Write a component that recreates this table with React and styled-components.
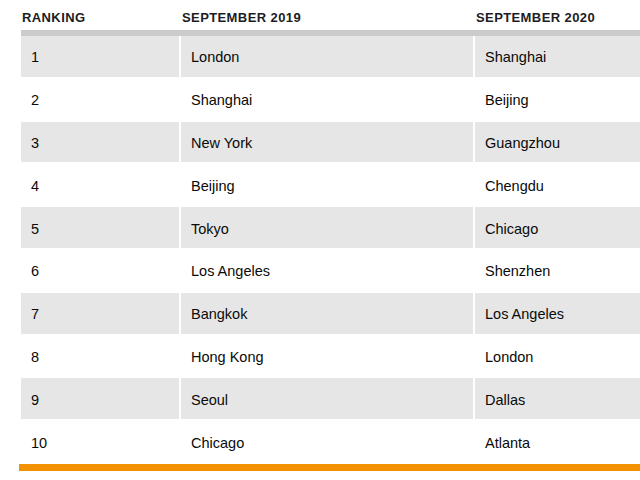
import styled, { createGlobalStyle } from "styled-components";

const GlobalStyle = createGlobalStyle`
  html, body {
    margin: 0;
    background: #fff;
    overflow: hidden;
  }
  body {
    font-family: "Liberation Sans", Arial, sans-serif;
    color: #0a0a0a;
  }
`;

const Wrapper = styled.div`
  padding-left: 21px;
  width: 619px;
`;

const Grid = styled.div`
  display: grid;
  grid-template-columns: 158px 292px 1fr;
  column-gap: 2px;
`;

const HeadRow = styled(Grid)`
  height: 30px;
  align-items: center;
  border-bottom: 6px solid #cbcbcb;
`;

const HeadCell = styled.div`
  padding-left: 1px;
  padding-top: 4px;
  font-size: 13px;
  font-weight: bold;
  letter-spacing: 0.4px;
  color: #1c1c24;
`;

const Row = styled(Grid)`
  height: 42.8px;
  box-sizing: border-box;
  border-bottom: 2px solid #fff;
`;

const Cell = styled.div`
  display: flex;
  align-items: center;
  padding-left: 10px;
  padding-top: 2px;
  font-size: 14.5px;
  background: ${(p) => (p.$shaded ? "#e6e6e6" : "#fff")};
`;

const Bottom = styled.div`
  height: 7px;
  margin-left: -2px;
  background: #f39200;
`;

const rows = [
  ["1", "London", "Shanghai"],
  ["2", "Shanghai", "Beijing"],
  ["3", "New York", "Guangzhou"],
  ["4", "Beijing", "Chengdu"],
  ["5", "Tokyo", "Chicago"],
  ["6", "Los Angeles", "Shenzhen"],
  ["7", "Bangkok", "Los Angeles"],
  ["8", "Hong Kong", "London"],
  ["9", "Seoul", "Dallas"],
  ["10", "Chicago", "Atlanta"],
];

const App = () => (
  <>
    <GlobalStyle />
    <Wrapper>
      <HeadRow>
        <HeadCell>RANKING</HeadCell>
        <HeadCell>SEPTEMBER 2019</HeadCell>
        <HeadCell>SEPTEMBER 2020</HeadCell>
      </HeadRow>
      {rows.map((r, i) => (
        <Row key={r[0]}>
          {r.map((text, j) => (
            <Cell key={j} $shaded={i % 2 === 0}>
              {text}
            </Cell>
          ))}
        </Row>
      ))}
      <Bottom />
    </Wrapper>
  </>
);

export default App;
